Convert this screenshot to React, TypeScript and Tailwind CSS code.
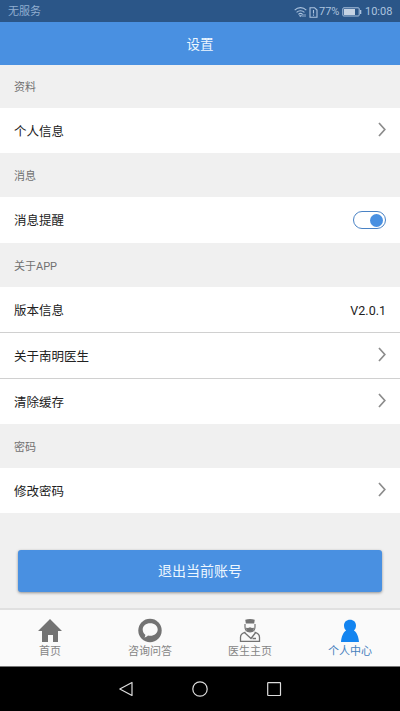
import type { ReactNode } from 'react';

function Chevron() {
  return (
    <svg width="8" height="15" viewBox="0 0 8 15" fill="none" stroke="#8c8c8c" strokeWidth="1.7" className="mb-[3px]">
      <path d="M1 1 6.8 7.5 1 14" />
    </svg>
  );
}

function Section({ children, size = 'h-11' }: { children: ReactNode; size?: string }) {
  return <div className={`flex shrink-0 items-center px-3.5 pt-1 text-[11px] text-[#707070] ${size}`}>{children}</div>;
}

function Row({ label, size, children, line }: { label: string; size: string; children: ReactNode; line?: boolean }) {
  return (
    <div
      className={`flex shrink-0 items-center justify-between bg-white px-3.5 text-[12.5px] text-[#222] ${size} ${
        line ? 'border-b border-[#d0d0d0]' : ''
      }`}
    >
      <span className="pt-[3px]">{label}</span>
      {children}
    </div>
  );
}

function Tab({ label, active, children }: { label: string; active?: boolean; children: ReactNode }) {
  return (
    <div className={`flex flex-1 flex-col items-center pt-[8px] text-[11px] ${active ? 'text-[#4580bd]' : 'text-[#858585]'}`}>
      <svg width="26" height="25" viewBox="0 0 26 25" className="shrink-0">
        {children}
      </svg>
      <span className="pt-px leading-[15px]">{label}</span>
    </div>
  );
}

export default function App() {
  return (
    <div className="flex h-[711px] w-[400px] flex-col overflow-hidden bg-[#f0f0f0] font-[Roboto,'Noto_Sans_CJK_SC',sans-serif]">
      <div className="flex h-[22px] shrink-0 items-center bg-[#2b5688] pt-0.5 pr-[7px] pl-2 text-[11px] text-[#91aed0]">
        <span>无服务</span>
        <div className="ml-auto flex items-center text-[#adc4df]">
          <svg width="13" height="12" viewBox="0 0 13 12" fill="none" stroke="currentColor" strokeWidth="1.1">
            <path d="M.7 4.1C4 .8 9 .8 12.3 4.1M2.6 6.3c2.2-2.1 5.6-2.1 7.8 0M4.4 8.4c1.2-1.1 3-1.1 4.2 0" />
            <path d="M5.5 9.5 6.5 11 7.5 9.5ZM9 8v3M11 8v3" strokeWidth=".8" />
          </svg>
          <svg width="9" height="11" viewBox="0 0 9 11" fill="none" stroke="currentColor" strokeWidth="1.1" className="ml-[2px]">
            <path d="M1 .8h4.6L8 3v7.2H1ZM4.5 3v3.500M4.500 7.500v1.200" />
          </svg>
          <span className="ml-px w-[22px] text-[11px]">77%</span>
          <svg width="20" height="10" viewBox="0 0 20 10" className="ml-px">
            <rect x=".8" y=".8" width="16.4" height="8.2" rx="1" fill="none" stroke="currentColor" strokeWidth="1" />
            <path d="M2 2h11v6H2Z" fill="#c6d3e3" />
            <path d="M18 3h1.300v4H18Z" fill="currentColor" />
          </svg>
          <span className="ml-[3px] w-[28px] text-[11px]">10:08</span>
        </div>
      </div>
      <div className="flex h-[43px] shrink-0 items-center justify-center bg-[#4990e1] pt-px text-[13.5px] text-[#edf7ff]">设置</div>

      <Section size="h-[43px]">资料</Section>
      <Row label="个人信息" size="h-[45px]">
        <Chevron />
      </Row>
      <Section>消息</Section>
      <Row label="消息提醒" size="h-[46px]">
        <span className="flex h-[18px] w-[33px] items-center justify-end rounded-full border border-[#4a83c5] pr-[2px]">
          <span className="size-[13px] rounded-full bg-[#4990e1]" />
        </span>
      </Row>
      <Section>关于APP</Section>
      <Row label="版本信息" size="h-[46px]" line>
        <span className="pt-[3px]">V2.0.1</span>
      </Row>
      <Row label="关于南明医生" size="h-[46px]" line>
        <Chevron />
      </Row>
      <Row label="清除缓存" size="h-[45px]">
        <Chevron />
      </Row>
      <Section>密码</Section>
      <Row label="修改密码" size="h-[45px]">
        <Chevron />
      </Row>

      <div className="flex-1 px-[18px] pt-[37px]">
        <button className="block h-[42px] w-full rounded-[3px] bg-[#4990e1] text-[14px] text-[#edf7ff] shadow-[0_1px_3px_rgba(0,0,0,0.4)]">
          退出当前账号
        </button>
      </div>

      <div className="flex h-[58px] shrink-0 border-t-2 border-[#e0e0e0] bg-[#fafafa]">
        <Tab label="首页">
          <path d="M13 1 25 13h-4v11h-5v-7h-5v7H5V13H1Z" fill="#737373" />
        </Tab>
        <Tab label="咨询问答">
          <circle cx="13" cy="12.5" r="11.7" fill="#737373" />
          <path
            d="M13.200 5.300c4.300 0 7.500 2.700 7.500 6.200s-3.200 6.300-7.500 6.300c-.9 0-1.500-.1-2.200-.2-1 1.100-2.200 1.800-3.700 2 .7-.9 1.100-1.800 1-2.900C6.700 15.500 5.700 13.600 5.700 11.500c0-3.500 3.200-6.200 7.500-6.200Z"
            fill="#fafafa"
          />
        </Tab>
        <Tab label="医生主页">
          <path d="M8.300 1.700C11 .6 15 .6 17.700 1.700L17.200 5.500H8.800Z" fill="#737373" />
          <path d="M8 6v3c0 3 2.200 4.800 5 4.800s5-1.800 5-4.800V6" fill="none" stroke="#737373" strokeWidth="1.200" />
          <path d="M9 9.800 11 10l2-.8 2 .8 2-.2c0 2.500-1.500 4-4 4s-4-1.500-4-4Z" fill="#737373" />
          <path
            d="M8.500 14.200c-3.500 1-5 2.500-5 5V23.300h19V19.200c0-2.500-1.500-4-5-5M8 15l6 5.500 4.300-5.500M15.500 20.500h3.500"
            fill="none"
            stroke="#737373"
            strokeWidth="1.300"
          />
        </Tab>
        <Tab label="个人中心" active>
          <path
            d="M13 1.800c3.600 0 6 2.400 6 5.600 0 2.300-.8 3.700-2.100 5C19.800 14.200 21.600 18.500 22 24H4c.4-5.500 2.200-9.800 5.100-11.600C7.800 11.100 7 9.700 7 7.400c0-3.200 2.400-5.600 6-5.600Z"
            fill="#1384f0"
          />
        </Tab>
      </div>

      <div className="flex h-[45px] shrink-0 items-center justify-center gap-[58px] border-t border-[#777] bg-black">
        <svg width="16" height="16" viewBox="0 0 16 16" fill="none" stroke="#ddd" strokeWidth="1.200" strokeLinejoin="round">
          <path d="M14 1.500v13L1.800 8Z" />
        </svg>
        <svg width="16" height="16" viewBox="0 0 16 16" fill="none" stroke="#ddd" strokeWidth="1.200">
          <circle cx="8" cy="8" r="7.200" />
        </svg>
        <svg width="16" height="16" viewBox="0 0 16 16" fill="none" stroke="#ddd" strokeWidth="1.200">
          <rect x="1.700" y="1.700" width="12.800" height="12.800" rx=".5" />
        </svg>
      </div>
    </div>
  );
}
